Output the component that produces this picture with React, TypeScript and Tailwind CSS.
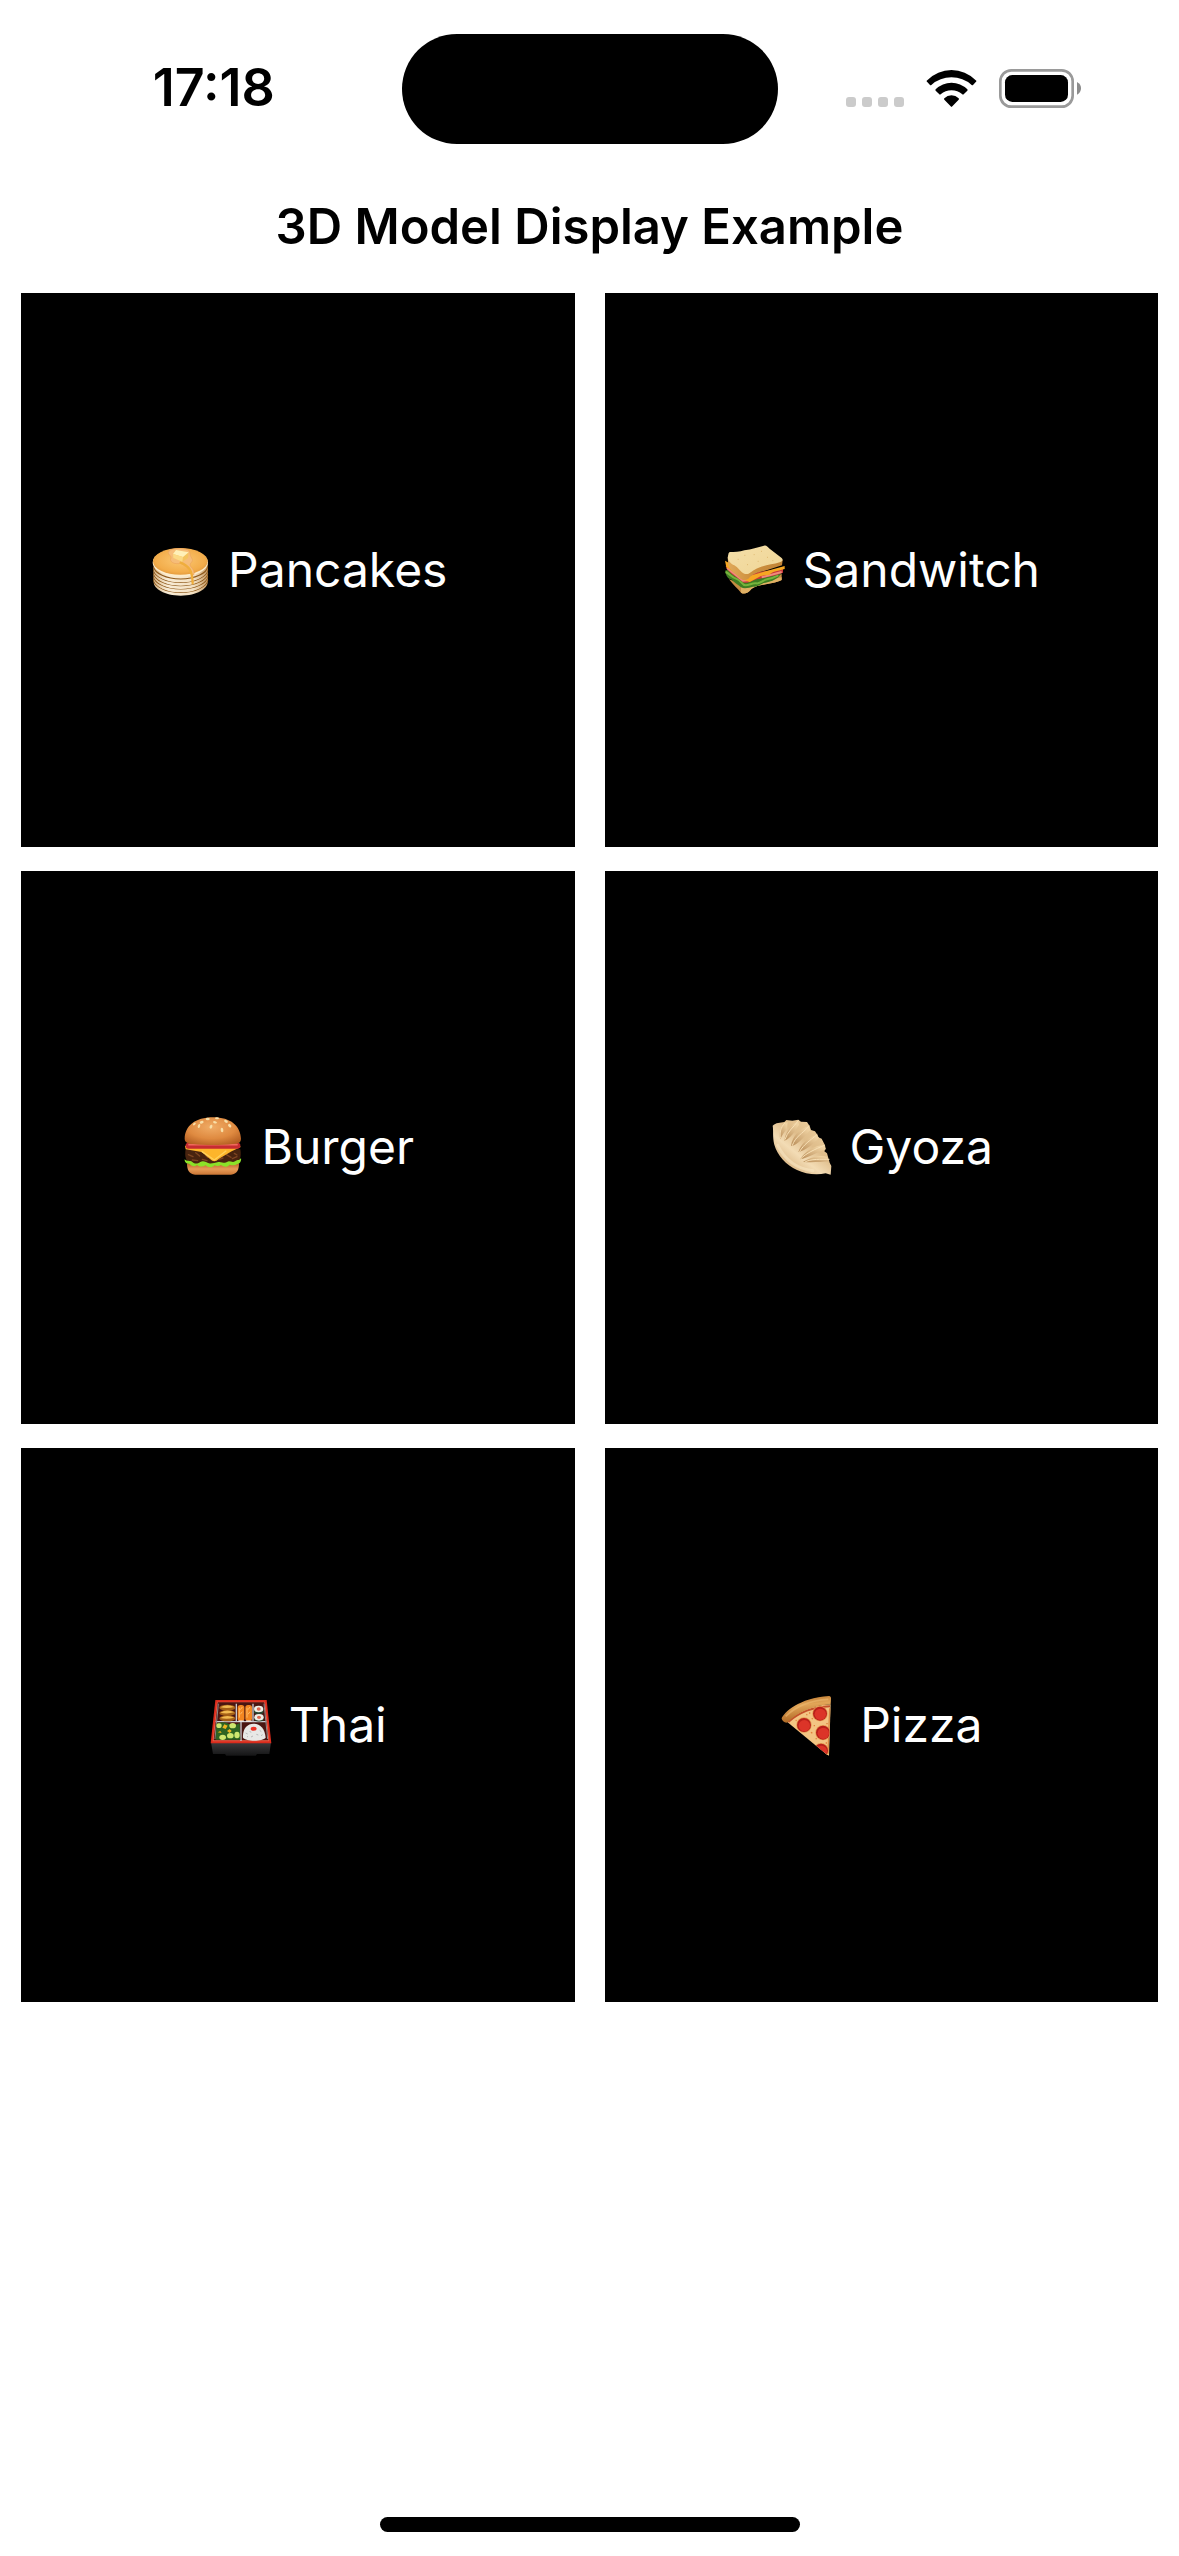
import type { ReactNode } from 'react'

function PancakesIcon() {
  const layers = [164, 154, 144, 134, 124]
  return (
    <svg viewBox="29 24 192 192" className="size-16 shrink-0" role="img" aria-label="Pancakes">
      <defs>
        <linearGradient id="pk-side" x1="0" x2="1" y1="0" y2="0">
          <stop offset="0" stopColor="#d9b78a" />
          <stop offset="0.25" stopColor="#f8ecd6" />
          <stop offset="0.75" stopColor="#f3e0c2" />
          <stop offset="1" stopColor="#c79a62" />
        </linearGradient>
        <radialGradient id="pk-top" cx="0.5" cy="0.45" r="0.6">
          <stop offset="0" stopColor="#fbc873" />
          <stop offset="0.75" stopColor="#f3ad4b" />
          <stop offset="1" stopColor="#e0963a" />
        </radialGradient>
      </defs>
      {layers.map((y) => (
        <g key={y}>
          <path d={`M46 ${y - 8}C46 ${y + 12} 78 ${y + 33} 127 ${y + 33}S208 ${y + 12} 208 ${y - 8}V${y - 22}H46Z`} fill="url(#pk-side)" />
          <path d={`M46 ${y - 14}C48 ${y + 6} 84 ${y + 23} 127 ${y + 23}S206 ${y + 6} 208 ${y - 14}`} fill="none" stroke="#8f5a1c" strokeWidth="3.5" />
        </g>
      ))}
      <ellipse cx="126" cy="98" rx="83" ry="42" fill="#fdeccb" />
      <ellipse cx="126" cy="94" rx="82" ry="40" fill="url(#pk-top)" />
      <path d="M92 63C102 54 130 54 150 60C158 66 152 74 160 84C168 96 152 98 156 108C166 118 168 126 167 134L160 134C158 120 142 108 126 100C108 104 92 96 98 84C100 76 84 72 92 63Z" fill="#f6bd79" stroke="#eda45c" strokeWidth="2" />
      <path d="M127 98C150 108 162 118 163 160" fill="none" stroke="#f0ae3c" strokeWidth="7" strokeLinecap="round" />
      <path d="M104 72L113 60L151 67L149 84L132 95L105 84Z" fill="#f4c35e" />
      <path d="M104 72L113 60L151 67L134 81Z" fill="#fff0b8" />
      <path d="M104 72L134 81L132 95L105 84Z" fill="#fbd985" />
    </svg>
  )
}

function SandwichIcon() {
  return (
    <svg viewBox="40 24 192 192" className="size-16 shrink-0" role="img" aria-label="Sandwich">
      <defs>
        <linearGradient id="sw-top" x1="0" x2="1" y1="0" y2="1">
          <stop offset="0" stopColor="#f5dfa8" />
          <stop offset="1" stopColor="#efd596" />
        </linearGradient>
        <linearGradient id="sw-crust" x1="0" x2="1" y1="0" y2="0">
          <stop offset="0" stopColor="#e0a95a" />
          <stop offset="0.4" stopColor="#cf913f" />
          <stop offset="1" stopColor="#c08337" />
        </linearGradient>
      </defs>
      <path d="M58 148L92 160L216 132V150C190 164 150 160 126 176C114 190 104 194 94 188C84 176 70 164 58 148Z" fill="#c68c43" />
      <path d="M94 172C118 166 146 158 216 142V150C190 164 150 160 126 176C114 190 104 194 94 188Z" fill="#e0b064" />
      <path d="M46 122C50 138 54 146 64 148C74 158 84 164 94 172C106 178 120 172 130 170C150 170 156 158 168 158C182 156 196 150 206 142L216 130L120 140L60 118Z" fill="#3f7d22" />
      <path d="M48 126C62 132 66 144 80 146S96 166 108 166S128 158 140 160S160 150 172 148S194 142 206 136" fill="none" stroke="#76b43c" strokeWidth="6" />
      <path d="M48 108C54 124 68 134 80 142L102 158C122 160 130 148 150 146L200 136L220 128V116L120 130L58 100Z" fill="#c8383a" />
      <path d="M52 114L100 152L122 150M156 142L216 126" fill="none" stroke="#f08a7c" strokeWidth="6" />
      <path d="M46 92L60 100L110 140L225 108V117C200 124 188 124 180 134L154 138L120 156L98 148L60 118L50 112Z" fill="#f6a722" />
      <path d="M54 82L56 106C64 126 78 130 88 142C98 154 114 152 120 142C134 126 156 126 180 118L217 106L219 90L160 60Z" fill="url(#sw-crust)" />
      <path d="M60 66C74 66 90 66 104 61C126 58 144 52 163 47C170 45 174 50 178 55L216 84C222 90 218 94 210 97C188 104 158 106 140 116C124 124 120 134 106 132C92 128 86 112 74 106C62 100 52 90 55 78Q56 68 60 66Z" fill="url(#sw-top)" />
      <path d="M84 88h3M104 76h3M132 74h3M154 64h3M112 104h3M172 82h3M144 94h3M188 92h3" stroke="#dfba72" strokeWidth="3" />
    </svg>
  )
}

function BurgerIcon() {
  return (
    <svg viewBox="36 33 192 192" className="size-16 shrink-0" role="img" aria-label="Burger">
      <defs>
        <radialGradient id="bg-bun" cx="0.48" cy="0.35" r="0.7">
          <stop offset="0" stopColor="#f0ac66" />
          <stop offset="0.6" stopColor="#df8a40" />
          <stop offset="1" stopColor="#b45f22" />
        </radialGradient>
        <linearGradient id="bg-base" x1="0" x2="0" y1="0" y2="1">
          <stop offset="0" stopColor="#b8662a" />
          <stop offset="0.5" stopColor="#e79b57" />
          <stop offset="1" stopColor="#c97534" />
        </linearGradient>
      </defs>
      <path d="M54 178H210C210 198 204 211 186 212H78C60 211 54 198 54 178Z" fill="url(#bg-base)" />
      <path d="M50 136H214C218 160 212 176 196 180H68C50 176 46 156 50 136Z" fill="#47230f" />
      <path d="M58 152l14 6M80 146l12 10M70 168l16 2M100 166l14 4M150 166l12 -4M172 152l14 8M190 164l14 -6M196 148l8 5M110 154l6 6" stroke="#7d4522" strokeWidth="4" strokeLinecap="round" />
      <path d="M47 166C54 174 62 168 70 174S84 180 94 174S112 176 120 178S138 176 148 174S166 180 174 174S190 178 198 172S212 170 216 162C218 172 212 180 204 180C196 186 190 184 182 182C172 192 164 188 156 183C148 188 142 186 136 184C128 194 116 190 110 184C100 190 92 188 84 183C76 190 66 186 62 180C52 180 46 174 47 166Z" fill="#8be228" />
      <path d="M48 126C52 122 60 124 66 124H206Q216 124 214 130L188 142L150 164Q136 178 124 166L98 144L50 136Z" fill="#fdb52b" />
      <path d="M98 142L136 168L172 140" fill="none" stroke="#ffd25c" strokeWidth="4" />
      <rect x="50" y="116" width="164" height="18" rx="8" fill="#c62b31" />
      <path d="M60 122H204" stroke="#f06a5c" strokeWidth="5" strokeLinecap="round" />
      <path d="M47 104C48 66 78 40 132 40S214 66 216 104C216 118 204 119 190 120C158 124 104 124 72 120C58 119 47 116 47 104Z" fill="url(#bg-bun)" />
      <g fill="#f8dfa8">
        <ellipse cx="116" cy="45" rx="6" ry="4" />
        <ellipse cx="144" cy="43" rx="6" ry="3" />
        <ellipse cx="98" cy="55" rx="6" ry="4" transform="rotate(-20 98 55)" />
        <ellipse cx="138" cy="55" rx="6" ry="3.5" transform="rotate(15 138 55)" />
        <ellipse cx="90" cy="66" rx="3.5" ry="6" transform="rotate(20 90 66)" />
        <ellipse cx="126" cy="68" rx="4" ry="6" transform="rotate(20 126 68)" />
        <ellipse cx="159" cy="78" rx="4" ry="6.5" transform="rotate(-10 159 78)" />
        <ellipse cx="171" cy="52" rx="6" ry="4" transform="rotate(30 171 52)" />
        <ellipse cx="182" cy="65" rx="6" ry="4" transform="rotate(50 182 65)" />
        <ellipse cx="76" cy="60" rx="5" ry="3" transform="rotate(-40 76 60)" />
      </g>
    </svg>
  )
}

function GyozaIcon() {
  return (
    <svg viewBox="31 33 192 192" className="size-16 shrink-0" role="img" aria-label="Gyoza">
      <defs>
        <linearGradient id="gy-body" x1="0.2" x2="0.8" y1="0.8" y2="0.1">
          <stop offset="0" stopColor="#dcb988" />
          <stop offset="0.3" stopColor="#f3dcb5" />
          <stop offset="0.6" stopColor="#dfbd8b" />
          <stop offset="1" stopColor="#edcf9f" />
        </linearGradient>
        <linearGradient id="gy-fold" x1="0" x2="0.6" y1="1" y2="0">
          <stop offset="0" stopColor="#b98d59" />
          <stop offset="1" stopColor="#efd2a2" />
        </linearGradient>
      </defs>
      <path d="M39 65C48 56 62 56 74 54L80 48L98 50L116 47L124 53L142 54L150 66L154 78L166 82L174 94L176 100L186 104L196 124L198 134L194 142L202 148L210 176L215 186L213 212L198 208C170 214 136 210 112 198C80 184 52 152 44 122C38 98 42 80 39 65Z" fill="url(#gy-body)" />
      <g fill="url(#gy-fold)">
        <path d="M74 58C60 70 58 92 62 106C68 92 74 84 82 74L84 54Z" />
        <path d="M116 52C98 60 80 76 74 110C92 104 106 82 118 62Z" />
        <path d="M148 66C124 72 98 94 94 126C114 124 132 100 152 78Z" />
        <path d="M172 92C148 98 124 118 116 144C136 140 158 122 178 102Z" />
        <path d="M194 124C170 122 134 142 122 166C150 160 170 146 198 136Z" />
        <path d="M202 158C176 152 148 162 130 174C156 176 184 174 208 172Z" />
      </g>
      <g fill="none" stroke="#f8e0b6" strokeWidth="3" strokeLinecap="round">
        <path d="M76 56C62 72 60 84 62 102" />
        <path d="M116 50C98 74 84 82 76 106" />
        <path d="M148 66C126 92 108 96 98 124" />
        <path d="M172 92C148 112 134 120 120 142" />
        <path d="M194 124C166 136 138 148 124 164" />
        <path d="M208 166C186 166 152 164 136 174" />
      </g>
      <path d="M54 124C74 164 108 194 160 200" fill="none" stroke="#f9e6c3" strokeWidth="9" strokeLinecap="round" opacity="0.6" />
    </svg>
  )
}

function BentoIcon() {
  return (
    <svg viewBox="30 24 192 192" className="size-16 shrink-0" role="img" aria-label="Bento box">
      <defs>
        <linearGradient id="bt-front" x1="0" x2="0" y1="0" y2="1">
          <stop offset="0" stopColor="#3b3b3d" />
          <stop offset="1" stopColor="#151516" />
        </linearGradient>
      </defs>
      <path d="M36 172H216L211 207H174L170 212H82L78 207H42Z" fill="url(#bt-front)" />
      <path d="M49 45H203L217 175H35Z" fill="#d92b1c" />
      <path d="M54 50H198L211 169H41Z" fill="#f4624a" />
      <path d="M56 52H196L208 166H44Z" fill="#4a1511" />
      <path d="M112 56V110M50 110H202M126 112V168M162 56V110" stroke="#c9c9cf" strokeWidth="4" />
      <path d="M58 56L48 162M195 56L206 162" stroke="#8b8789" strokeWidth="3" />
      {[68, 84, 100].map((y) => (
        <g key={y}>
          <ellipse cx="85" cy={y} rx="24" ry="9" fill="#a45f16" />
          <path d={`M64 ${y - 1}Q84 ${y - 13} 106 ${y - 2}Q84 ${y + 4} 64 ${y - 1}Z`} fill="#f1b950" />
        </g>
      ))}
      <rect x="116" y="60" width="20" height="48" rx="8" fill="#f38620" />
      <rect x="139" y="60" width="20" height="48" rx="8" fill="#f38620" />
      <path d="M121 68v30M130 66l-6 8M130 80l-6 8M144 68v30M153 66l-6 8M153 80l-6 8" stroke="#ffbc67" strokeWidth="3" />
      <path d="M118 108h17M141 108h17" stroke="#fff" strokeWidth="3" />
      <path d="M165 72v12Q179 92 193 84V72ZM166 97v9Q180 113 194 106V97Z" fill="#284330" />
      <ellipse cx="179" cy="72" rx="14" ry="10" fill="#eef0e7" />
      <ellipse cx="180" cy="97" rx="14" ry="10" fill="#eef0e7" />
      <ellipse cx="179" cy="72" rx="6" ry="5" fill="#df6852" />
      <ellipse cx="180" cy="97" rx="6" ry="5" fill="#df6852" />
      <path d="M52 116Q70 108 88 116T122 114L124 164H50Z" fill="#2e6422" />
      <g fill="#cfe66f">
        <ellipse cx="71" cy="157" rx="10" ry="8" />
        <ellipse cx="94" cy="152" rx="10" ry="8" />
        <ellipse cx="114" cy="150" rx="8" ry="10" />
        <ellipse cx="101" cy="122" rx="10" ry="8" />
        <ellipse cx="60" cy="122" rx="8" ry="7" />
      </g>
      <path d="M76 118l10 4-6 10-10-4ZM84 138l8-6 6 6-6 6ZM56 142l8-4 4 6Z" fill="#efb41f" />
      <path d="M132 158C130 132 144 116 164 116S198 132 200 158C190 170 142 170 132 158Z" fill="#e8e8e6" />
      <path d="M140 144l6 3M152 138l4 5M182 136l5 4M172 148l6 2M156 156l6-3M186 152l5-3M144 156l3-2" stroke="#b9b9b9" strokeWidth="3" />
      <ellipse cx="164" cy="131" rx="9" ry="6" fill="#ee3325" />
    </svg>
  )
}

function PizzaIcon() {
  const slices = [
    { cx: 153, cy: 86, r: 21 },
    { cx: 105, cy: 120, r: 21 },
    { cx: 162, cy: 143, r: 21 },
    { cx: 156, cy: 197, r: 21 },
  ]
  return (
    <svg viewBox="33 24 192 192" className="size-16 shrink-0" role="img" aria-label="Pizza">
      <defs>
        <linearGradient id="pz-crust" x1="0.3" x2="0.5" y1="0" y2="1">
          <stop offset="0" stopColor="#b8742c" />
          <stop offset="0.35" stopColor="#e2a558" />
          <stop offset="1" stopColor="#a8611e" />
        </linearGradient>
        <clipPath id="pz-clip">
          <path d="M54 110C86 78 132 60 184 58L179 212Z" />
        </clipPath>
      </defs>
      <path d="M54 110C86 78 132 60 185 58L180 212L172 208Z" fill="#f3c583" />
      <path d="M58 111C92 80 134 66 183 64" fill="none" stroke="#c4502a" strokeWidth="6" />
      <path d="M182 70L177 206" stroke="#d98a43" strokeWidth="4" />
      <g clipPath="url(#pz-clip)">
        {slices.map((s) => (
          <g key={s.cy}>
            <circle cx={s.cx} cy={s.cy} r={s.r + 2} fill="#e49650" />
            <circle cx={s.cx} cy={s.cy} r={s.r} fill="#b9201a" />
            <circle cx={s.cx + 1} cy={s.cy + 2} r={s.r - 4} fill="#dc3428" />
          </g>
        ))}
        <path d="M120 84h4M128 100l4 2M134 122h4M126 142l4 3M140 160l3 2M112 90l3-2M80 106l3 1M172 116h4M170 174h4" stroke="#df7f3b" strokeWidth="4" />
      </g>
      <path d="M38 100C44 84 90 38 180 33Q187 34 186 42L185 58C132 62 88 80 56 112C50 116 38 108 38 100Z" fill="url(#pz-crust)" />
      <path d="M50 94C80 64 124 46 178 43" fill="none" stroke="#edb970" strokeWidth="5" opacity="0.6" />
    </svg>
  )
}

const foods: { name: string; icon: ReactNode }[] = [
  { name: 'Pancakes', icon: <PancakesIcon /> },
  { name: 'Sandwitch', icon: <SandwichIcon /> },
  { name: 'Burger', icon: <BurgerIcon /> },
  { name: 'Gyoza', icon: <GyozaIcon /> },
  { name: 'Thai', icon: <BentoIcon /> },
  { name: 'Pizza', icon: <PizzaIcon /> },
]

function StatusBar() {
  return (
    <div className="grid grid-cols-[1fr_376px_1fr] items-center pt-[34px]">
      <time className="pb-0.5 pl-[26px] text-center text-[52px] leading-[60px] font-semibold">17:18</time>
      <div className="h-[110px] rounded-full bg-black" />
      <div className="flex items-center justify-center pr-[29px] pb-0.5">
        <div className="mt-[27px] mr-[22px] flex gap-[6px]">
          {[0, 1, 2, 3].map((i) => (
            <span key={i} className="size-[10px] rounded-[3px] bg-[#cbcbcb]" />
          ))}
        </div>
        <svg viewBox="318 84 153 117" className="mr-[22px] h-[39px] w-[51px]" role="img" aria-label="Wi-Fi">
          <path d="M320 119Q353 87 394.500 87T469 119Q470 121 468 122L459 132Q457 134 455 132Q429 109 394.500 109T334 132Q332 134 330 132L321 122Q319 121 320 119Z" />
          <path d="M347 145Q367 125 394.500 125T442 145Q444 147 442 149L431 160Q429 162 427 160Q413 148 394.500 148T362 160Q360 162 358 160L347 149Q345 147 347 145Z" />
          <path d="M373 172Q382 163 394.500 163T416 172Q418 174 416 176L397 196Q394.500 199 392 196L373 176Q371 174 373 172Z" />
        </svg>
        <svg viewBox="537 84 246 117" className="h-[39px] w-[82px]" role="img" aria-label="Battery full">
          <rect x="541" y="88" width="217" height="109" rx="33" fill="none" stroke="#9a9a9a" strokeWidth="8" />
          <rect x="555" y="102" width="189" height="81" rx="22" />
          <path d="M771 123Q783 129 783 142T771 161Z" fill="#8c8c8c" />
        </svg>
      </div>
    </div>
  )
}

export default function App() {
  return (
    <div className="flex min-h-screen flex-col bg-white font-[Inter,sans-serif] text-black">
      <StatusBar />
      <h1 className="mt-[53px] text-center text-[49px] leading-[60px] font-semibold">3D Model Display Example</h1>
      <main className="flex-1 px-[21px] pt-9">
        <ul className="grid grid-cols-2 gap-x-[30px] gap-y-6">
          {foods.map((food) => (
            <li key={food.name} className="flex aspect-square items-center justify-center gap-4 bg-black text-5xl leading-[60px] text-white">
              {food.icon}
              <span>{food.name}</span>
            </li>
          ))}
        </ul>
      </main>
      <div className="mx-auto mb-6 h-[15px] w-[420px] rounded-full bg-black" />
    </div>
  )
}
